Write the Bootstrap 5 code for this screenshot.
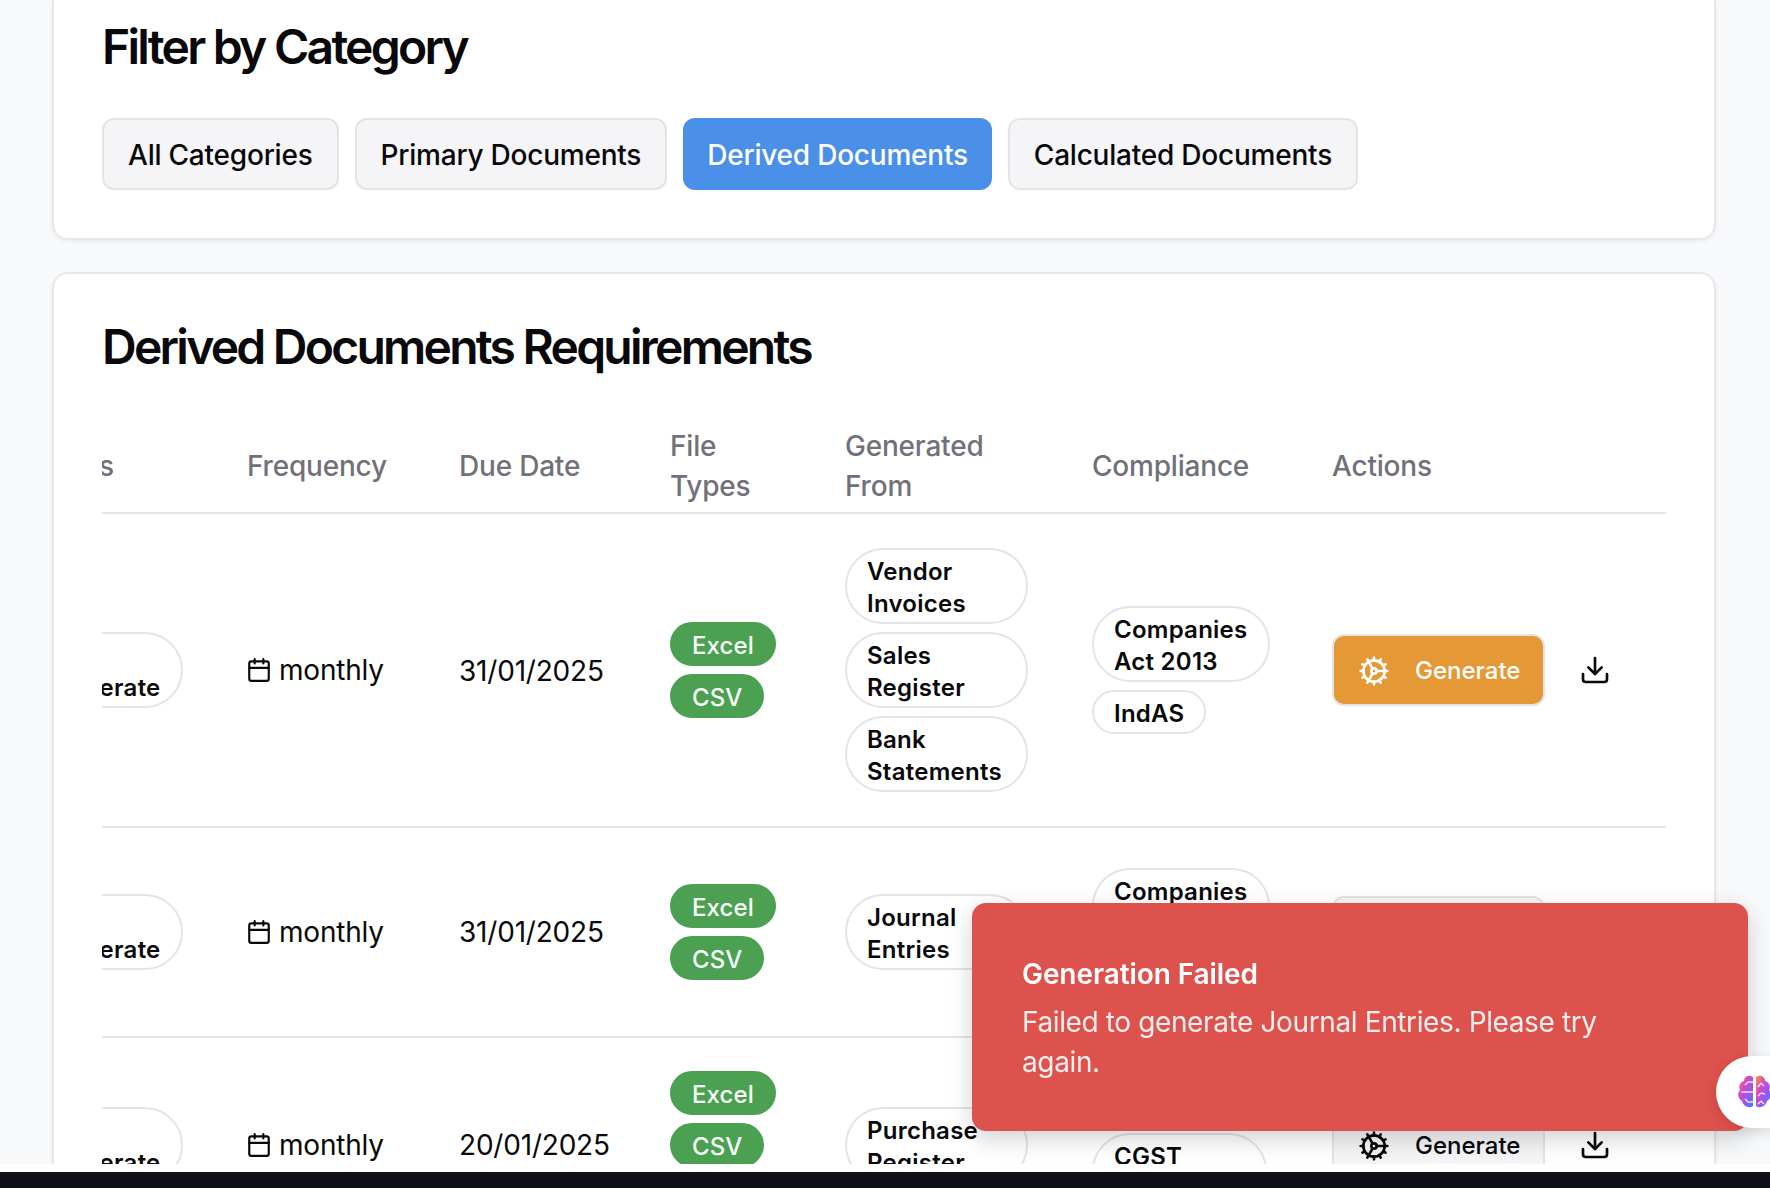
<!DOCTYPE html>
<html lang="en">
<head>
    <meta charset="UTF-8">
    <meta name="viewport" content="width=device-width, initial-scale=1.0">
    <title>Derived Documents Requirements</title>
    <link href="https://cdn.jsdelivr.net/npm/bootstrap@5.3.1/dist/css/bootstrap.min.css" rel="stylesheet">
    <style>
        html, body { height: 100%; overflow: hidden; }
        body {
            background-color: #0f1018;
            color: #09090b;
            font-family: Inter, "Liberation Sans", sans-serif;
            font-size: 28px;
            line-height: 40px;
            letter-spacing: -.2px;
        }
        .page-view { height: 1164px; overflow: hidden; background-color: #f8f9fb; padding: 0 54px 0 52px; }
        .page-gap { height: 8px; background-color: #fff; }
        .panel { background: #fff; border: 2px solid #e8e8eb; border-radius: 16px; box-shadow: 0 2px 4px rgba(0,0,0,.05); padding: 49px 48px 48px; }
        .panel-top { border-top: 0; border-radius: 0 0 16px 16px; padding-top: 23px; margin-bottom: 32px; }
        .panel-title { font-size: 48px; line-height: 48px; font-weight: 600; letter-spacing: -2.75px; margin: 0 0 47px; }
        .filter-btn { height: 72px; padding: 1px 24px 0; font-size: 28px; font-weight: 500; letter-spacing: -.22px; color: #09090b; background: #f5f5f7; border: 2px solid #e4e4e7; border-radius: 12px; }
        .filter-btn.on { background: #4a90e8; border: 0; color: #fff; }
        .table-clip { overflow-x: auto; scrollbar-width: none; }
        .req-table { border-collapse: collapse; table-layout: fixed; width: 1660px; }
        .req-table th { font-weight: 500; color: #71717a; padding: 8px 32px 6px; border-bottom: 2px solid #e4e4e7; vertical-align: middle; }
        .req-table td { padding: 34px 32px; border-bottom: 2px solid #e4e4e7; vertical-align: middle; }
        .req-table tr > :first-child { padding-left: 24px; padding-right: 40px; }
        .req-table td.due-cell { padding-top: 35px; padding-bottom: 33px; }
        .req-table td.comp-cell { padding-right: 33px; }
        .req-table .row-two td { height: 210px; padding-top: 0; padding-bottom: 0; }
        .req-table .row-three td { padding-top: 33px; padding-bottom: 33px; }
        .w-status { width: 209px; }
        .w-freq { width: 212px; }
        .w-due { width: 211px; }
        .w-file { width: 175px; }
        .w-gen { width: 247px; }
        .w-comp { width: 240px; }
        .w-act { width: 366px; }
        .cal-icon { margin-left: -1px; margin-right: 3px; }
        .tag-stack { display: flex; flex-direction: column; align-items: flex-start; gap: 8px; }
        .pill { display: inline-block; font-size: 24px; line-height: 32px; font-weight: 600; padding: 6px 20px 2px; border: 2px solid #e4e4e7; border-radius: 38px; color: #09090b; background: #fff; letter-spacing: .25px; }
        .pill-green { background: #4ba052; border-color: #4ba052; color: #f8fff8; font-weight: 500; letter-spacing: .1px; }
        .gen-btn { height: 72px; width: 213px; padding: 1px 24px 0; display: inline-flex; align-items: center; gap: 25px; font-size: 24px; font-weight: 500; letter-spacing: 0; background: #f5f5f7; border: 2px solid #e4e4e7; border-radius: 12px; color: #09090b; }
        .gen-btn.busy { background: #e59936; color: #fff; }
        .dl-btn { width: 68px; height: 72px; background: none; border: 0; padding: 0; display: inline-flex; align-items: center; justify-content: center; color: #09090b; }
        .toast-box { position: fixed; left: 972px; top: 903px; width: 776px; height: 228px; padding: 51px 100px 50px 50px; background: #dd524c; color: #fff; border-radius: 14px; box-shadow: 0 8px 24px rgba(0,0,0,.18); z-index: 5; letter-spacing: -.38px; }
        .toast-title { font-weight: 600; margin-bottom: 8px; letter-spacing: -.08px; }
        .toast-text { opacity: .9; }
        .brain-tab { position: fixed; left: 1716px; top: 1056px; width: 110px; height: 72px; background: #fff; border-radius: 36px; box-shadow: 0 4px 14px rgba(0,0,0,.12); z-index: 6; display: flex; align-items: center; padding-left: 21px; }
    </style>
</head>
<body>
<div class="page-view">
    <div class="panel panel-top">
        <h2 class="panel-title">Filter by Category</h2>
        <div class="d-flex gap-3">
            <button class="filter-btn">All Categories</button>
            <button class="filter-btn">Primary Documents</button>
            <button class="filter-btn on">Derived Documents</button>
            <button class="filter-btn">Calculated Documents</button>
        </div>
    </div>

    <div class="panel">
        <h2 class="panel-title">Derived Documents Requirements</h2>
        <div class="table-clip" id="tableClip">
            <table class="req-table">
                <thead>
                <tr>
                    <th class="w-status">Status</th>
                    <th class="w-freq">Frequency</th>
                    <th class="w-due">Due Date</th>
                    <th class="w-file">File Types</th>
                    <th class="w-gen">Generated From</th>
                    <th class="w-comp">Compliance</th>
                    <th class="w-act">Actions</th>
                </tr>
                </thead>
                <tbody id="reqRows"></tbody>
            </table>
        </div>
    </div>
</div>
<div class="page-gap"></div>

<div class="toast-box">
    <div class="toast-title">Generation Failed</div>
    <div class="toast-text">Failed to generate Journal Entries. Please try again.</div>
</div>

<div class="brain-tab">
    <svg width="34" height="36" viewBox="0 0 34 36" fill="none">
        <defs>
            <linearGradient id="brainFill" x1="0" y1="0" x2="1" y2="1">
                <stop offset="0" stop-color="#f59e2c"/>
                <stop offset=".35" stop-color="#d946c8"/>
                <stop offset=".7" stop-color="#8b5cf6"/>
                <stop offset="1" stop-color="#3b82f6"/>
            </linearGradient>
        </defs>
        <path d="M16 3C11 0 7 3 7 7 3 8 1 12 3 16 0 19 1 25 5 27 6 32 12 35 16 32Z" fill="url(#brainFill)"/>
        <path d="M19 3C24 0 28 3 28 7 32 8 34 12 32 16 35 19 34 25 30 27 29 32 23 35 19 32Z" fill="url(#brainFill)"/>
        <path d="M16 8H11L8 11M16 18H4M16 28H11L8 25M24 9l-3 4M24 9l3 3M24 19l-3 3M24 19l4 1M24 27l-3 3M24 27l3 3" stroke="#eadfff" stroke-width="1.5"/>
    </svg>
</div>

<script src="https://cdn.jsdelivr.net/npm/bootstrap@5.3.1/dist/js/bootstrap.bundle.min.js"></script>
<script>
    const calendarIcon = `<svg class="cal-icon" width="26" height="26" viewBox="0 0 24 24" fill="none" stroke="currentColor" stroke-width="2" stroke-linecap="round" stroke-linejoin="round"><rect x="3" y="4" width="18" height="18" rx="2"/><path d="M16 2v4M8 2v4M3 10h18"/></svg>`;
    const cogIcon = `<svg width="32" height="32" viewBox="0 0 24 24" fill="none" stroke="currentColor" stroke-width="2" stroke-linecap="round" stroke-linejoin="round" class="flex-shrink-0"><path d="M12 20a8 8 0 1 0 0-16 8 8 0 0 0 0 16Z"/><path d="M12 14a2 2 0 1 0 0-4 2 2 0 0 0 0 4Z"/><path d="M12 2v2M12 22v-2M17 20.66l-1-1.73M11 10.27 7 3.34M20.66 17l-1.73-1M3.34 7l1.73 1M14 12h8M2 12h2M20.66 7l-1.73 1M3.34 17l1.73-1M17 3.34l-1 1.73M11 13.73l-4 6.93"/></svg>`;
    const downloadIcon = `<svg width="32" height="32" viewBox="0 0 24 24" fill="none" stroke="currentColor" stroke-width="2" stroke-linecap="round" stroke-linejoin="round"><path d="M21 15v4a2 2 0 0 1-2 2H5a2 2 0 0 1-2-2v-4"/><path d="M7 10l5 5 5-5"/><path d="M12 15V3"/></svg>`;

    const rows = [
        { due: '31/01/2025', files: ['Excel', 'CSV'], from: ['Vendor Invoices', 'Sales Register', 'Bank Statements'], comp: ['Companies Act 2013', 'IndAS'], busy: true },
        { due: '31/01/2025', files: ['Excel', 'CSV'], from: ['Journal Entries'], comp: ['Companies Act 2013', 'IndAS'], cls: 'row-two' },
        { due: '20/01/2025', files: ['Excel', 'CSV', 'PDF'], from: ['Purchase Register'], comp: ['GST', 'CGST Rules'], cls: 'row-three' }
    ];

    const stack = (items, cls = '') => `<div class="tag-stack">${items.map(t => `<span class="pill ${cls}">${t}</span>`).join('')}</div>`;

    document.getElementById('reqRows').innerHTML = rows.map(r => `
        <tr class="${r.cls || ''}">
            <td>${stack(['To Generate'])}</td>
            <td><div class="d-flex align-items-center gap-1">${calendarIcon}<span>monthly</span></div></td>
            <td class="due-cell">${r.due}</td>
            <td>${stack(r.files, 'pill-green')}</td>
            <td>${stack(r.from)}</td>
            <td class="comp-cell">${stack(r.comp)}</td>
            <td><div class="d-flex align-items-center"><button class="gen-btn ${r.busy ? 'busy' : ''}">${cogIcon}<span>Generate</span></button><button class="dl-btn ms-3">${downloadIcon}</button></div></td>
        </tr>`).join('');

    // table is scrolled sideways in the reference
    document.getElementById('tableClip').scrollLeft = 96;
</script>
</body>
</html>
